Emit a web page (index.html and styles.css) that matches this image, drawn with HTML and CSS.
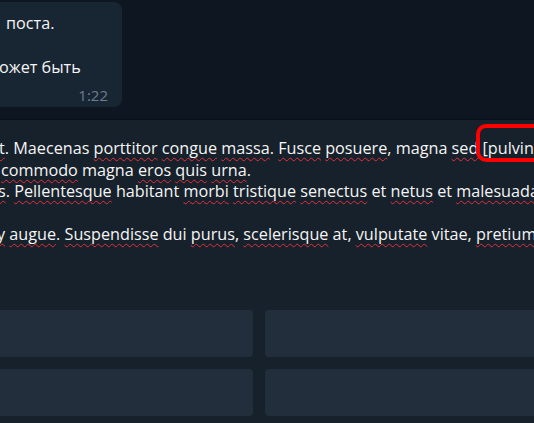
FILE: index.html
```html
<!DOCTYPE html>
<html lang="ru">
<head>
	<meta charset="UTF-8">
	<title>Чат</title>
	<link rel="stylesheet" href="styles.css">
</head>
<body>
	<div class="history">
		<div class="bubble">
			<div class="msg l1">поста.</div>
			<div class="msg">&nbsp;</div>
			<div class="msg l3">ожет быть</div>
			<div class="time">1:22</div>
		</div>
	</div>
	<div class="compose">
		<div class="field">
			<div class="row r1"><span class="err">t</span>. Maecenas <span class="err">porttitor</span> <span class="err">congue</span> <span class="err">massa</span>. <span class="err">Fusce</span> <span class="err">posuere</span>, magna <span class="err">sed</span> [pulvinar ultricies, purus lectus</div>
			<div class="row r2"><span class="err">commodo</span> magna <span class="err">eros</span> <span class="err">quis</span> <span class="err">urna</span>.</div>
			<div class="row r3"><span class="err">s</span>. <span class="err">Pellentesque</span> habitant <span class="err">morbi</span> <span class="err">tristique</span> <span class="err">senectus</span> et <span class="err">netus</span> et <span class="err">malesuada</span> fames ac turpis</div>
			<div class="row">&nbsp;</div>
			<div class="row r5"><span class="err">y</span> <span class="err">augue</span>. <span class="err">Suspendisse</span> dui <span class="err">purus</span>, <span class="err">scelerisque</span> at, <span class="err">vulputate</span> vitae, <span class="err">pretium</span> mattis, nunc.</div>
		</div>
		<div class="mark"></div>
		<div class="keys">
			<div class="key"></div>
			<div class="key"></div>
			<div class="key"></div>
			<div class="key"></div>
		</div>
	</div>
</body>
</html>
```
FILE: styles.css
```css
html,body{margin:0;padding:0;}
body{width:534px;height:423px;overflow:hidden;background:#17212b;color:#f5f5f5;font-family:"Open Sans","Noto Sans",sans-serif;font-size:16.2px;}

.history{height:120px;background:#0e1621;border-bottom:1px solid #0b1119;padding-top:2px;box-sizing:border-box;}
.bubble{width:122px;height:105px;background:#182533;border-radius:0 8px 8px 0;box-sizing:border-box;padding-top:10px;position:relative;}
.msg{line-height:22px;white-space:nowrap;}
.msg.l1{padding-left:6px;}
.msg.l3{margin-left:-1px;}
.time{position:absolute;right:14px;bottom:2px;font-size:15px;color:#6d7f8f;line-height:20px;}

.compose{position:relative;}
.field{padding-top:18px;height:190px;box-sizing:border-box;white-space:nowrap;overflow:hidden;}
.row{line-height:21.6px;}
.r1{margin-left:-1px;}
.r2{margin-left:1px;}
.r3{margin-left:-2px;}
.r5{margin-left:-3px;}
.err{text-decoration:underline wavy #e0323c;text-decoration-thickness:1.2px;text-underline-offset:3px;text-decoration-skip-ink:none;}

.mark{position:absolute;left:476px;top:4px;width:80px;height:38px;border:4px solid #ff0000;border-radius:10px;box-sizing:border-box;}

.keys{display:grid;grid-template-columns:280px 280px;grid-auto-rows:47px;gap:12px;margin-left:-27px;}
.key{background:#232e3c;border-radius:4px;}
```
